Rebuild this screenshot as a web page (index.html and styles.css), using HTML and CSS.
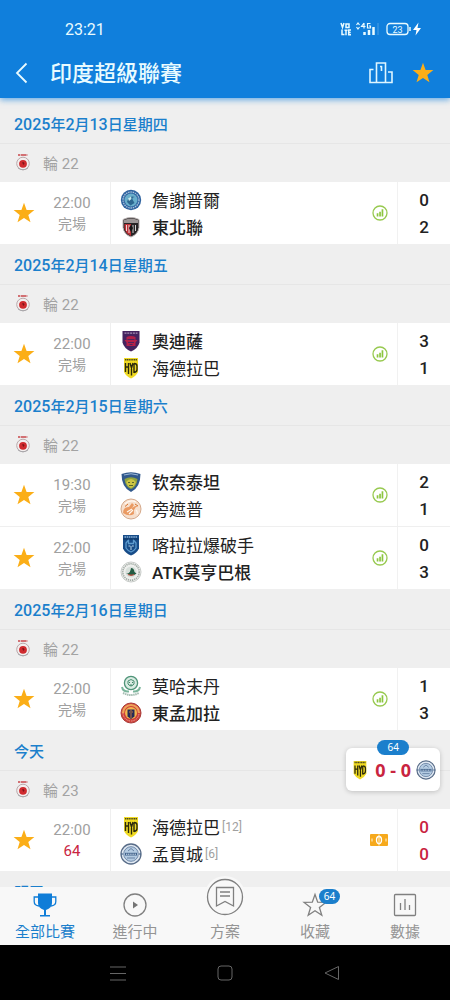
FILE: index.html
```html
<!DOCTYPE html>
<html lang="zh-Hant">
<head>
<meta charset="utf-8">
<meta name="viewport" content="width=device-width, initial-scale=1">
<title>印度超級聯賽</title>
<link rel="stylesheet" href="styles.css">
</head>
<body>
<svg class="sprite" aria-hidden="true">
  <symbol id="star" viewBox="0 0 22 22"><path fill="#fbae17" d="M11 .8l2.6 7.1 7.8.2-6.100 4.800 2.200 7.400L11 16l-6.500 4.300 2.200-7.400L.6 8.100l7.800-.2z"/></symbol>
  <symbol id="league" viewBox="0 0 16 18">
    <path d="M3 2h10" stroke="#c9484c" stroke-width="1.600" stroke-dasharray="2 .6 6 1"/>
    <circle cx="8" cy="10.500" r="6.300" fill="#f3eeee" stroke="#b9a9ab"/>
    <circle cx="8" cy="10.800" r="3.900" fill="#cf2a2e"/>
    <path d="M7 9.500l1.500-.5 1 1.500-1 1.500z" fill="#7d1418"/>
    <path d="M3 15q5 3.500 10 0" fill="none" stroke="#a8a8ac"/>
  </symbol>
  <symbol id="stats" viewBox="0 0 16 16">
    <circle cx="8" cy="8" r="7" fill="#fff" stroke="#97c94f" stroke-width="1.300"/>
    <path fill="#8cc63f" d="M4.700 8.200h1.700v3.300H4.700zM7.200 6.800h1.700v4.700H7.200zM9.600 4.300h1.700v7.200H9.600z"/>
  </symbol>
  <symbol id="jamshedpur" viewBox="0 0 22 22">
    <circle cx="11" cy="11" r="10.200" fill="#2f639f"/>
    <circle cx="11" cy="11" r="8" fill="none" stroke="#a9c3de" stroke-width="1.300" stroke-dasharray="1.500 .8"/>
    <circle cx="11" cy="11" r="6.500" fill="#69aecb"/>
    <path d="M7 13c1-5 5-6.500 8-5-2 0-3 1-2.500 2.500l2 3.500-4 2.500z" fill="#2c6690"/>
    <path d="M8 9.500l3-2 .5 2.500-2.500 2z" fill="#c5e8ea"/>
  </symbol>
  <symbol id="northeast" viewBox="0 0 22 22">
    <path d="M3 3.500q8-4 16 0v8q-1 7-8 9.500-7-2.500-8-9.500z" fill="#282526" stroke="#bcb5b5"/>
    <path d="M4 4q7-3 14 0v3H4z" fill="#9c9595"/>
    <path d="M4.500 8H11v12q-6-3-6.500-8z" fill="#bd3036"/>
    <path d="M6.500 9v6M9 9v8M13 9v8M15.500 9v6" stroke="#fff" stroke-width=".8"/>
    <path d="M11 9l2 3-2 4-2-4z" fill="#171415"/>
  </symbol>
  <symbol id="odisha" viewBox="0 0 22 22">
    <path d="M2.500 1h17v11.500Q18 18.500 11 21.500 4 18.500 2.500 12.500z" fill="#45235f"/>
    <path d="M4.500 3.200h13" stroke="#a78fb5" stroke-width="1.300" stroke-dasharray="2 .8"/>
    <path d="M6.500 7q4.500-2 9 0v3h2l-2 2.500V16h-9v-3.500L4.500 10h2z" fill="#b32149"/>
    <path d="M7.500 9.500h7M8 12.500h6M9.500 14.500h3" stroke="#51265f"/>
  </symbol>
  <symbol id="hyderabad" viewBox="0 0 22 22">
    <path d="M4 1h14v14q-2 4-7 6.500-5-2.500-7-6.500z" fill="#f0da22"/>
    <path d="M5 2.800h12" stroke="#4a471c" stroke-width="1.500" stroke-dasharray="1.300 .5"/>
    <path d="M5.500 6v9M8.500 6v11M5.500 10h3M10 6l1.500 5 1.500-5M11.500 10v8.500M14 6.500V16M14 6.500q3 0 3 2.500v3.500q0 2.500-3 3" fill="none" stroke="#2b2a0c" stroke-width="1.400"/>
  </symbol>
  <symbol id="chennaiyin" viewBox="0 0 22 22">
    <path d="M1.500 3q9.500-3.500 19 0 0 13.500-9.500 18Q1.500 16.500 1.500 3z" fill="#31598c"/>
    <path d="M4 4q7-2.500 14 0" fill="none" stroke="#9db9d8"/>
    <path d="M4.500 8Q11 4.500 17.500 8q-1 8-6.500 10-5.500-2-6.500-10z" fill="#8fa33e"/>
    <path d="M6 11q5-6 10 0l-2 4-3 2-3-2z" fill="#cdc544"/>
    <path d="M8 11.500h2M12 11.500h2M9 14.500h4" stroke="#5a6a2c"/>
  </symbol>
  <symbol id="punjab" viewBox="0 0 22 22">
    <circle cx="11" cy="11" r="10" fill="#f6dfcd" stroke="#d5a98b"/>
    <path d="M3 15q0-6 6-6l3-4 2 2-2 3q4-3 6-2-5 2-4 8-5 3-11-1z" fill="#ea9a62"/>
    <path d="M5 6q5-5 11-2M7 14l5-3M9 16l4-4M16 12q2 2 1 4" fill="none" stroke="#fff8f0" stroke-width="1.200"/>
    <path d="M5 8.500l3-2.500M15 6l3 2" stroke="#d6742f"/>
  </symbol>
  <symbol id="kerala" viewBox="0 0 22 22">
    <path d="M3 1h16v13.500q-2 4.500-8 7-6-2.500-8-7z" fill="#174c88"/>
    <path d="M4.500 3h13" stroke="#8ab0d4" stroke-width="1.500" stroke-dasharray="1.500 .7"/>
    <path d="M6 14V9l2.500-3v3.500h5V6L16 9v5q-2 3-5 4-3-1-5-4z" fill="none" stroke="#5c9bcf" stroke-width="1.300"/>
    <path d="M8.500 12h1.800M12 12h1.800M11 12v4" stroke="#b5d4e8"/>
    <path d="M3 5h16" stroke="#0c3260"/>
  </symbol>
  <symbol id="mohunbagan" viewBox="0 0 22 22">
    <circle cx="11" cy="11" r="10" fill="#eff0ee" stroke="#c8ccc9"/>
    <circle cx="11" cy="11" r="8.200" fill="none" stroke="#a3aca6" stroke-width="1.600" stroke-dasharray="1.300 .8"/>
    <circle cx="11" cy="11" r="5.600" fill="#d8e0db"/>
    <path d="M6 12q4 2 5-5 3 0 3.500 4l2 1.500q-5 4-10.500-.5z" fill="#235c43"/>
    <path d="M8 13.500q3 1.500 6 0" fill="none" stroke="#bb5143" stroke-width="1.300"/>
  </symbol>
  <symbol id="mohammedan" viewBox="0 0 22 22">
    <circle cx="11" cy="8" r="6.600" fill="#d9ebe2" stroke="#4f9478" stroke-width="1.300"/>
    <path d="M8 6q3-3 6 0v3q-3 4-6 0z" fill="none" stroke="#498e71"/>
    <path d="M9 7.500h1M12 7.500h1M9.500 10h3" stroke="#3c8264"/>
    <path d="M2 12q1 5 7 4.500M20 12q-1 5-7 4.500" fill="none" stroke="#7ab59b" stroke-width="2"/>
    <path d="M3 18q8 4 16 0" fill="none" stroke="#a5bdb2" stroke-width="2" stroke-dasharray="1.500 .6"/>
  </symbol>
  <symbol id="eastbengal" viewBox="0 0 22 22">
    <circle cx="11" cy="11" r="10" fill="#cf4038" stroke="#a93c39"/>
    <path d="M3 11a8 8 0 0 1 16 0" fill="none" stroke="#eda35a" stroke-width="2.200"/>
    <path d="M3 11a8 8 0 0 0 16 0" fill="none" stroke="#e8a3a0" stroke-dasharray="1.500 1"/>
    <circle cx="11" cy="11" r="6" fill="#f2b64f"/>
    <path d="M7.500 7.500h7v7L11 17l-3.500-2.500z" fill="#252b57"/>
    <path d="M11 7.500V16M9 10h1M12 10h1" stroke="#c77942"/>
  </symbol>
  <symbol id="mumbai" viewBox="0 0 22 22">
    <circle cx="11" cy="11" r="10" fill="#dfe8f2" stroke="#586c88" stroke-width="1.300"/>
    <circle cx="11" cy="11" r="7.300" fill="#b4cbe2" stroke="#7189a8"/>
    <path d="M5 9.800h12v2.700H5z" fill="#3f608a"/>
    <path d="M6 11.200h10" stroke="#dce9f5" stroke-dasharray="1.200 .6"/>
    <path d="M8 8l3-2.500L14 8M7 15h8" stroke="#6681a3" fill="none"/>
    <path d="M1 11h2M19 11h2" stroke="#34557f"/>
  </symbol>
</svg>

<div class="app">
  <header class="top">
    <div class="status">
      <span>23:21</span>
      <svg width="84" height="16" viewBox="0 0 84 16" fill="none" stroke="#e9fbff">
        <g stroke-width="1.500">
          <path d="M1 2l1.500 4.500L4 2M6 3h3v3.500H6zM2 8.500v5h2.500M4.500 9.200h3M6 9.200v5M11 9H8.700v4.700H11M8.700 11.500h2"/>
        </g>
        <path d="M16.500 4l1.500-2 1.500 2M16.500 6l1.500 2 1.500-2" stroke-width="1.200"/>
        <path d="M24 2l-2.500 3.500h4M24 2v5.500M30.500 2.500h-3v4.500h3V5h-1.500" stroke-width="1.200"/>
        <path d="M24.500 11v3M29 9v5M33.500 6v8" stroke-width="2.500"/>
        <path d="M38 2v12" stroke="#4a9fe4"/>
        <rect x="47" y="2.500" width="21" height="11" rx="3" stroke-width="1.300"/>
        <path d="M70 6v4" stroke-width="1.500"/>
        <path d="M78.500 1.500L73 9h3.500l-1 5.500L81 7h-3.500z" fill="#fff" stroke="none"/>
        <text x="57.500" y="11.500" text-anchor="middle" class="battery-text">23</text>
      </svg>
    </div>
    <div class="titlebar">
      <button class="icon-btn" aria-label="返回"><svg width="14" height="22" viewBox="0 0 14 22"><path d="M11.500 1.500L2 11l9.500 9.500" fill="none" stroke="#e9fbff" stroke-width="1.800"/></svg></button>
      <h1>印度超級聯賽</h1>
      <button class="icon-btn" aria-label="排名"><svg width="26" height="24" viewBox="0 0 26 24" fill="none" stroke="#dff6ff" stroke-width="1.600"><path d="M8.500 21.500V2h9v19.500zM5.500 8.500H2v13h22V11h-4M12 5.500h1.500V10"/></svg></button>
      <button class="icon-btn" aria-label="收藏聯賽"><svg width="22" height="22"><use href="#star"/></svg></button>
    </div>
  </header>

  <main class="list">
    <section>
      <h2><span>2025</span>年<span>2</span>月<span>13</span>日星期四</h2>
      <div class="round"><svg><use href="#league"/></svg>輪 22</div>
      <article class="match">
        <button class="fav" aria-label="收藏"><svg><use href="#star"/></svg></button>
        <div class="when"><time>22:00</time><span>完場</span></div>
        <div class="teams">
          <div><svg><use href="#jamshedpur"/></svg>詹謝普爾</div>
          <div class="win"><svg><use href="#northeast"/></svg>東北聯</div>
        </div>
        <svg class="stats"><use href="#stats"/></svg>
        <div class="score"><span>0</span><span>2</span></div>
      </article>
    </section>

    <section>
      <h2><span>2025</span>年<span>2</span>月<span>14</span>日星期五</h2>
      <div class="round"><svg><use href="#league"/></svg>輪 22</div>
      <article class="match">
        <button class="fav" aria-label="收藏"><svg><use href="#star"/></svg></button>
        <div class="when"><time>22:00</time><span>完場</span></div>
        <div class="teams">
          <div class="win"><svg><use href="#odisha"/></svg>奧迪薩</div>
          <div><svg><use href="#hyderabad"/></svg>海德拉巴</div>
        </div>
        <svg class="stats"><use href="#stats"/></svg>
        <div class="score"><span>3</span><span>1</span></div>
      </article>
    </section>

    <section>
      <h2><span>2025</span>年<span>2</span>月<span>15</span>日星期六</h2>
      <div class="round"><svg><use href="#league"/></svg>輪 22</div>
      <article class="match">
        <button class="fav" aria-label="收藏"><svg><use href="#star"/></svg></button>
        <div class="when"><time>19:30</time><span>完場</span></div>
        <div class="teams">
          <div class="win"><svg><use href="#chennaiyin"/></svg>钦奈泰坦</div>
          <div><svg><use href="#punjab"/></svg>旁遮普</div>
        </div>
        <svg class="stats"><use href="#stats"/></svg>
        <div class="score"><span>2</span><span>1</span></div>
      </article>
      <article class="match">
        <button class="fav" aria-label="收藏"><svg><use href="#star"/></svg></button>
        <div class="when"><time>22:00</time><span>完場</span></div>
        <div class="teams">
          <div><svg><use href="#kerala"/></svg>喀拉拉爆破手</div>
          <div class="win"><svg><use href="#mohunbagan"/></svg>ATK莫亨巴根</div>
        </div>
        <svg class="stats"><use href="#stats"/></svg>
        <div class="score"><span>0</span><span>3</span></div>
      </article>
    </section>

    <section>
      <h2><span>2025</span>年<span>2</span>月<span>16</span>日星期日</h2>
      <div class="round"><svg><use href="#league"/></svg>輪 22</div>
      <article class="match">
        <button class="fav" aria-label="收藏"><svg><use href="#star"/></svg></button>
        <div class="when"><time>22:00</time><span>完場</span></div>
        <div class="teams">
          <div><svg><use href="#mohammedan"/></svg>莫哈末丹</div>
          <div class="win"><svg><use href="#eastbengal"/></svg>東孟加拉</div>
        </div>
        <svg class="stats"><use href="#stats"/></svg>
        <div class="score"><span>1</span><span>3</span></div>
      </article>
    </section>

    <section>
      <h2>今天</h2>
      <div class="round"><svg><use href="#league"/></svg>輪 23</div>
      <article class="match live">
        <button class="fav" aria-label="收藏"><svg><use href="#star"/></svg></button>
        <div class="when"><time>22:00</time><span>64</span></div>
        <div class="teams">
          <div><svg><use href="#hyderabad"/></svg>海德拉巴<small>[12]</small></div>
          <div><svg><use href="#mumbai"/></svg>孟買城<small>[6]</small></div>
        </div>
        <svg class="stats" viewBox="0 0 18 14"><rect y="1" width="18" height="12" rx="1" fill="#f6a91c"/><ellipse cx="9" cy="7" rx="2.500" ry="3.500" fill="none" stroke="#fff" stroke-width="1.300"/><path d="M9 1.500v11M2 5.500v3M16 5.500v3" stroke="#fff3d6"/></svg>
        <div class="score"><span>0</span><span>0</span></div>
      </article>
    </section>

    <section>
      <h2>明天</h2>
    </section>
  </main>

  <aside class="floating">
    <span class="pill">64</span>
    <svg><use href="#hyderabad"/></svg>
    <strong>0 - 0</strong>
    <svg><use href="#mumbai"/></svg>
  </aside>

  <nav class="tabs">
    <a href="#all" class="active"><span class="glyph"><svg width="26" height="26" viewBox="0 0 26 26"><path d="M6 1.500h14V11q0 5-6 7v5h4v1.500H8V23h4v-5q-6-2-6-7z" fill="#0f7dd8"/><path d="M6 5H2.200v4.500q0 4 4.800 4.500M20 5h3.800v4.500q0 4-4.800 4.500" fill="none" stroke="#0f7dd8" stroke-width="1.300"/></svg></span>全部比賽</a>
    <a href="#live"><span class="glyph"><svg width="26" height="26" viewBox="0 0 26 26"><circle cx="13" cy="13" r="11" fill="none" stroke="#808080" stroke-width="1.300"/><path d="M11 9.500l5 3.500-5 3.500z" fill="#747474"/></svg></span>進行中</a>
    <a href="#plans" class="raised"><span class="glyph"><svg width="42" height="42" viewBox="0 0 42 42" fill="none" stroke="#808080" stroke-width="1.300"><circle cx="21" cy="21" r="21" fill="#f8f8f8" stroke="none"/><circle cx="21" cy="21" r="17.500"/><path d="M12.500 11.500h17v18.500L21 25.500 12.500 30zM16 16h10M16 20h10"/></svg></span>方案</a>
    <a href="#favorites"><span class="glyph"><svg width="26" height="26" viewBox="0 0 26 26"><path d="M13 2.500l2.700 7.700 8.200.2-6.500 5 2.400 7.900-6.800-4.600-6.800 4.600 2.400-7.900-6.500-5 8.200-.2z" fill="none" stroke="#808080" stroke-width="1.300"/></svg><span class="count">64</span></span>收藏</a>
    <a href="#data"><span class="glyph"><svg width="26" height="26" viewBox="0 0 26 26" fill="none" stroke="#808080" stroke-width="1.300"><rect x="2.500" y="2.500" width="21" height="21" rx="1"/><path d="M8.500 11v7M13 7v11M17.500 13v5"/></svg></span>數據</a>
  </nav>

  <footer class="system">
    <button aria-label="最近"><svg width="18" height="18" viewBox="0 0 18 18"><path d="M1 3h16M1 9.500h16M1 16h16" stroke="#666"/></svg></button>
    <button aria-label="主畫面"><svg width="18" height="18" viewBox="0 0 18 18"><rect x="2" y="2" width="14" height="14" rx="3" fill="none" stroke="#666"/></svg></button>
    <button aria-label="返回"><svg width="18" height="18" viewBox="0 0 18 18"><path d="M15.500 2.500v13L2 9z" fill="none" stroke="#666" stroke-linejoin="round"/></svg></button>
  </footer>
</div>
</body>
</html>
```
FILE: styles.css
```css
* { box-sizing: border-box; }

body {
  margin: 0;
  font-family: Roboto, "Noto Sans CJK TC", sans-serif;
  color: #222;
  background: #efefef;
}

h1, h2 { margin: 0; font-weight: 500; }

button {
  padding: 0;
  border: 0;
  background: none;
  display: grid;
  place-items: center;
}

svg { display: block; flex: none; }

.sprite { position: absolute; width: 0; height: 0; }

.app {
  position: relative;
  height: 100vh;
  display: flex;
  flex-direction: column;
}

/* Header */
.top {
  position: relative;
  z-index: 1;
  flex: none;
  background: #107fdc;
  color: #e9fbff;
  box-shadow: 0 2px 6px #107fdc99;
}

.status {
  height: 48px;
  padding: 10px 26px 0 65px;
  display: flex;
  justify-content: space-between;
  align-items: center;
  font-size: 16px;
}

.battery-text {
  font: 9px Roboto, sans-serif;
  fill: #e9fbff;
  stroke: none;
}

.titlebar {
  height: 50px;
  padding: 0 16px 0 15px;
  display: flex;
  align-items: center;
  gap: 18px;
}

.titlebar h1 {
  flex: 1;
  margin-left: 3px;
  padding-top: 2px;
  font-size: 22px;
  line-height: 30px;
}

/* Fixture list */
.list {
  flex: 1;
  min-height: 0;
  padding-top: 5px;
  overflow: hidden;
}

h2 {
  height: 40px;
  padding-left: 14px;
  font-size: 15px;
  line-height: 44px;
  color: #1b7fcc;
}

h2 span { font-size: 16px; }

.round {
  height: 39px;
  padding: 0 0 2px 15px;
  display: flex;
  align-items: center;
  gap: 12px;
  border-top: 1px solid #e6e6e6;
  font-size: 15px;
  color: #a3a3a3;
}

.round svg { width: 16px; height: 18px; }

.match {
  height: 62px;
  display: flex;
  align-items: center;
  background: #fff;
}

.match + .match {
  height: 63px;
  border-top: 1px solid #efefef;
}

.fav { width: 48px; height: 100%; }
.fav svg { width: 22px; height: 22px; }

.when {
  width: 63px;
  height: 100%;
  padding: 2px 14px 0 0;
  display: flex;
  flex-direction: column;
  justify-content: center;
  align-items: center;
  border-right: 1px solid #efefef;
  font-size: 15px;
  line-height: 21px;
  color: #a0a0a0;
  white-space: nowrap;
}

.when span { font-size: 14px; }

.teams { flex: 1; padding-left: 9px; }

.teams div {
  height: 27px;
  display: flex;
  align-items: center;
  gap: 10px;
  font-size: 17px;
}

.teams svg { width: 22px; height: 22px; }
.teams .win { font-weight: 500; }

.teams small {
  margin-left: -8px;
  font-size: 12px;
  color: #a0a0a0;
}

.stats { width: 16px; height: 16px; margin-right: 9px; }
.live .stats { width: 18px; height: 14px; }

.score {
  width: 53px;
  height: 100%;
  padding-top: 2px;
  display: flex;
  flex-direction: column;
  justify-content: center;
  border-left: 1px solid #f1f1f1;
  font-size: 17px;
  font-weight: 500;
  line-height: 27px;
  text-align: center;
}

.live .score, .live .when span { color: #c9243f; }
.live .when span { font-size: 15px; }

/* Live score bubble */
.floating {
  position: absolute;
  right: 10px;
  bottom: 209px;
  height: 43px;
  padding: 0 4px;
  display: flex;
  align-items: center;
  gap: 5px;
  border-radius: 6px;
  background: #fff;
  box-shadow: 0 1px 5px #0003;
}

.floating svg { width: 20px; height: 20px; }

.floating strong {
  font: bold 18px "Noto Sans", sans-serif;
  color: #c9243f;
}

.pill, .count {
  position: absolute;
  height: 15px;
  border-radius: 8px;
  background: #1b7fcc;
  color: #fff;
  font: 10px/15px "Noto Sans", sans-serif;
  text-align: center;
}

.pill { width: 32px; top: -8px; left: calc(50% - 16px); }
.count { width: 21px; top: -3px; left: 17px; }

/* Bottom tabs */
.tabs {
  position: relative;
  flex: none;
  height: 58px;
  display: grid;
  grid-template-columns: repeat(5, 1fr);
  background: #f8f8f8;
}

.tabs a {
  padding-top: 5px;
  display: flex;
  flex-direction: column;
  align-items: center;
  gap: 4px;
  font-size: 15px;
  line-height: 20px;
  color: #949494;
  text-decoration: none;
}

.tabs .active { color: #1b7fcc; }

.glyph {
  position: relative;
  width: 26px;
  height: 26px;
  display: flex;
  justify-content: center;
  align-items: flex-end;
}

.raised .glyph { align-items: center; height: 42px; margin-top: -16px; }

/* System navigation */
.system {
  flex: none;
  height: 55px;
  padding: 0 64px;
  display: grid;
  grid-template-columns: repeat(3, 1fr);
  background: #000;
}
```
